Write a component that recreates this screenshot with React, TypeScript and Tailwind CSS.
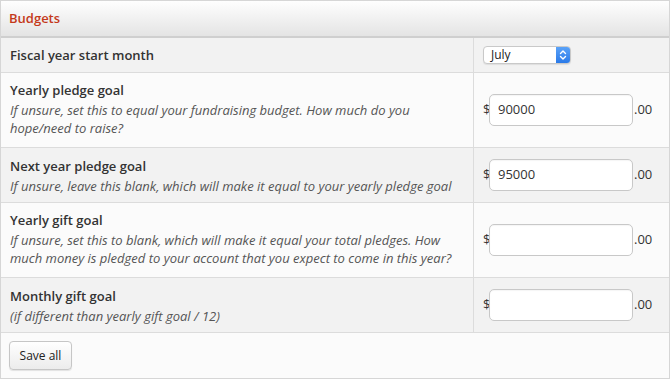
import React from "react";

const font = { fontFamily: '"Open Sans", "Liberation Sans", sans-serif' };

function Money({ value }: { value: string }) {
  return (
    <div className="flex items-center text-[13px] text-[#333]">
      <span className="w-[6px]">$</span>
      <div className="w-[144px] h-[32px] rounded-[5px] border border-[#c8c8c8] bg-white flex items-center pl-[8px] shadow-[inset_0_1px_1px_rgba(0,0,0,0.04)]">
        {value}
      </div>
      <span className="ml-[1px]">.00</span>
    </div>
  );
}

function Row({
  h,
  bg,
  title,
  desc,
  right,
  pad,
}: {
  h: string;
  bg: string;
  title: string;
  desc?: string[];
  right: React.ReactNode;
  pad?: string;
}) {
  return (
    <div className={`flex border-b border-[#dcdcdc] ${h} ${bg}`}>
      <div className={`w-[473px] border-r border-[#dcdcdc] px-[9px] flex flex-col justify-center ${pad ?? ""}`}>
        <div className="text-[13px] leading-[21px] font-semibold text-[#333]">{title}</div>
        {desc &&
          desc.map((d, i) => (
            <div key={i} className="text-[13px] leading-[18px] italic text-[#555]">
              {d}
            </div>
          ))}
      </div>
      <div className="flex-1 flex items-center pl-[9px]">{right}</div>
    </div>
  );
}

export default function App() {
  return (
    <div style={font} className="w-[671px] h-[380px] bg-white">
      <div className="w-[670px] border border-[#d6d6d6]">
        <div className="h-[37px] bg-gradient-to-b from-[#fefefe] to-[#e4e4e4] border-b-2 border-[#cfcfcf] flex items-center px-[8px]">
          <span className="text-[13px] font-semibold text-[#c4391a]">Budgets</span>
        </div>
        <Row
          h="h-[35px]"
          bg="bg-[#f2f2f2]"
          title="Fiscal year start month"
          right={
            <div className="w-[88px] h-[18px] rounded-[4px] border border-[#c9c9c9] bg-white flex items-center shadow-[0_1px_1px_rgba(0,0,0,0.08)] overflow-hidden">
              <span className="flex-1 pl-[7px] text-[12px] text-[#222] leading-none">July</span>
              <div className="w-[14px] h-full bg-gradient-to-b from-[#5aa2f8] to-[#2a7ae8] flex items-center justify-center">
                <svg width="8" height="12" viewBox="0 0 8 12" fill="none" stroke="white" strokeWidth="1.4" strokeLinecap="round" strokeLinejoin="round">
                  <path d="M1.5 4.5 L4 2 L6.5 4.5" />
                  <path d="M1.5 7.5 L4 10 L6.5 7.5" />
                </svg>
              </div>
            </div>
          }
        />
        <Row
          h="h-[75px]"
          bg="bg-[#fbfbfb]"
          pad="pb-[3px]"
          title="Yearly pledge goal"
          desc={[
            "If unsure, set this to equal your fundraising budget. How much do you",
            "hope/need to raise?",
          ]}
          right={<Money value="90000" />}
        />
        <Row
          h="h-[55px]"
          bg="bg-[#f2f2f2]"
          title="Next year pledge goal"
          desc={["If unsure, leave this blank, which will make it equal to your yearly pledge goal"]}
          right={<Money value="95000" />}
        />
        <Row
          h="h-[75px]"
          bg="bg-[#fbfbfb]"
          pad="pb-[3px]"
          title="Yearly gift goal"
          desc={[
            "If unsure, set this to blank, which will make it equal your total pledges. How",
            "much money is pledged to your account that you expect to come in this year?",
          ]}
          right={<Money value="" />}
        />
        <Row
          h="h-[55px]"
          bg="bg-[#f2f2f2]"
          title="Monthly gift goal"
          desc={["(if different than yearly gift goal / 12)"]}
          right={<Money value="" />}
        />
        <div className="h-[45px] bg-[#fbfbfb] flex items-center px-[8px]">
          <button className="w-[63px] h-[29px] rounded-[4px] border border-[#c6c6c6] bg-gradient-to-b from-white to-[#ececec] text-[12px] text-[#222] shadow-[0_1px_1px_rgba(0,0,0,0.1)]">
            Save all
          </button>
        </div>
      </div>
    </div>
  );
}
